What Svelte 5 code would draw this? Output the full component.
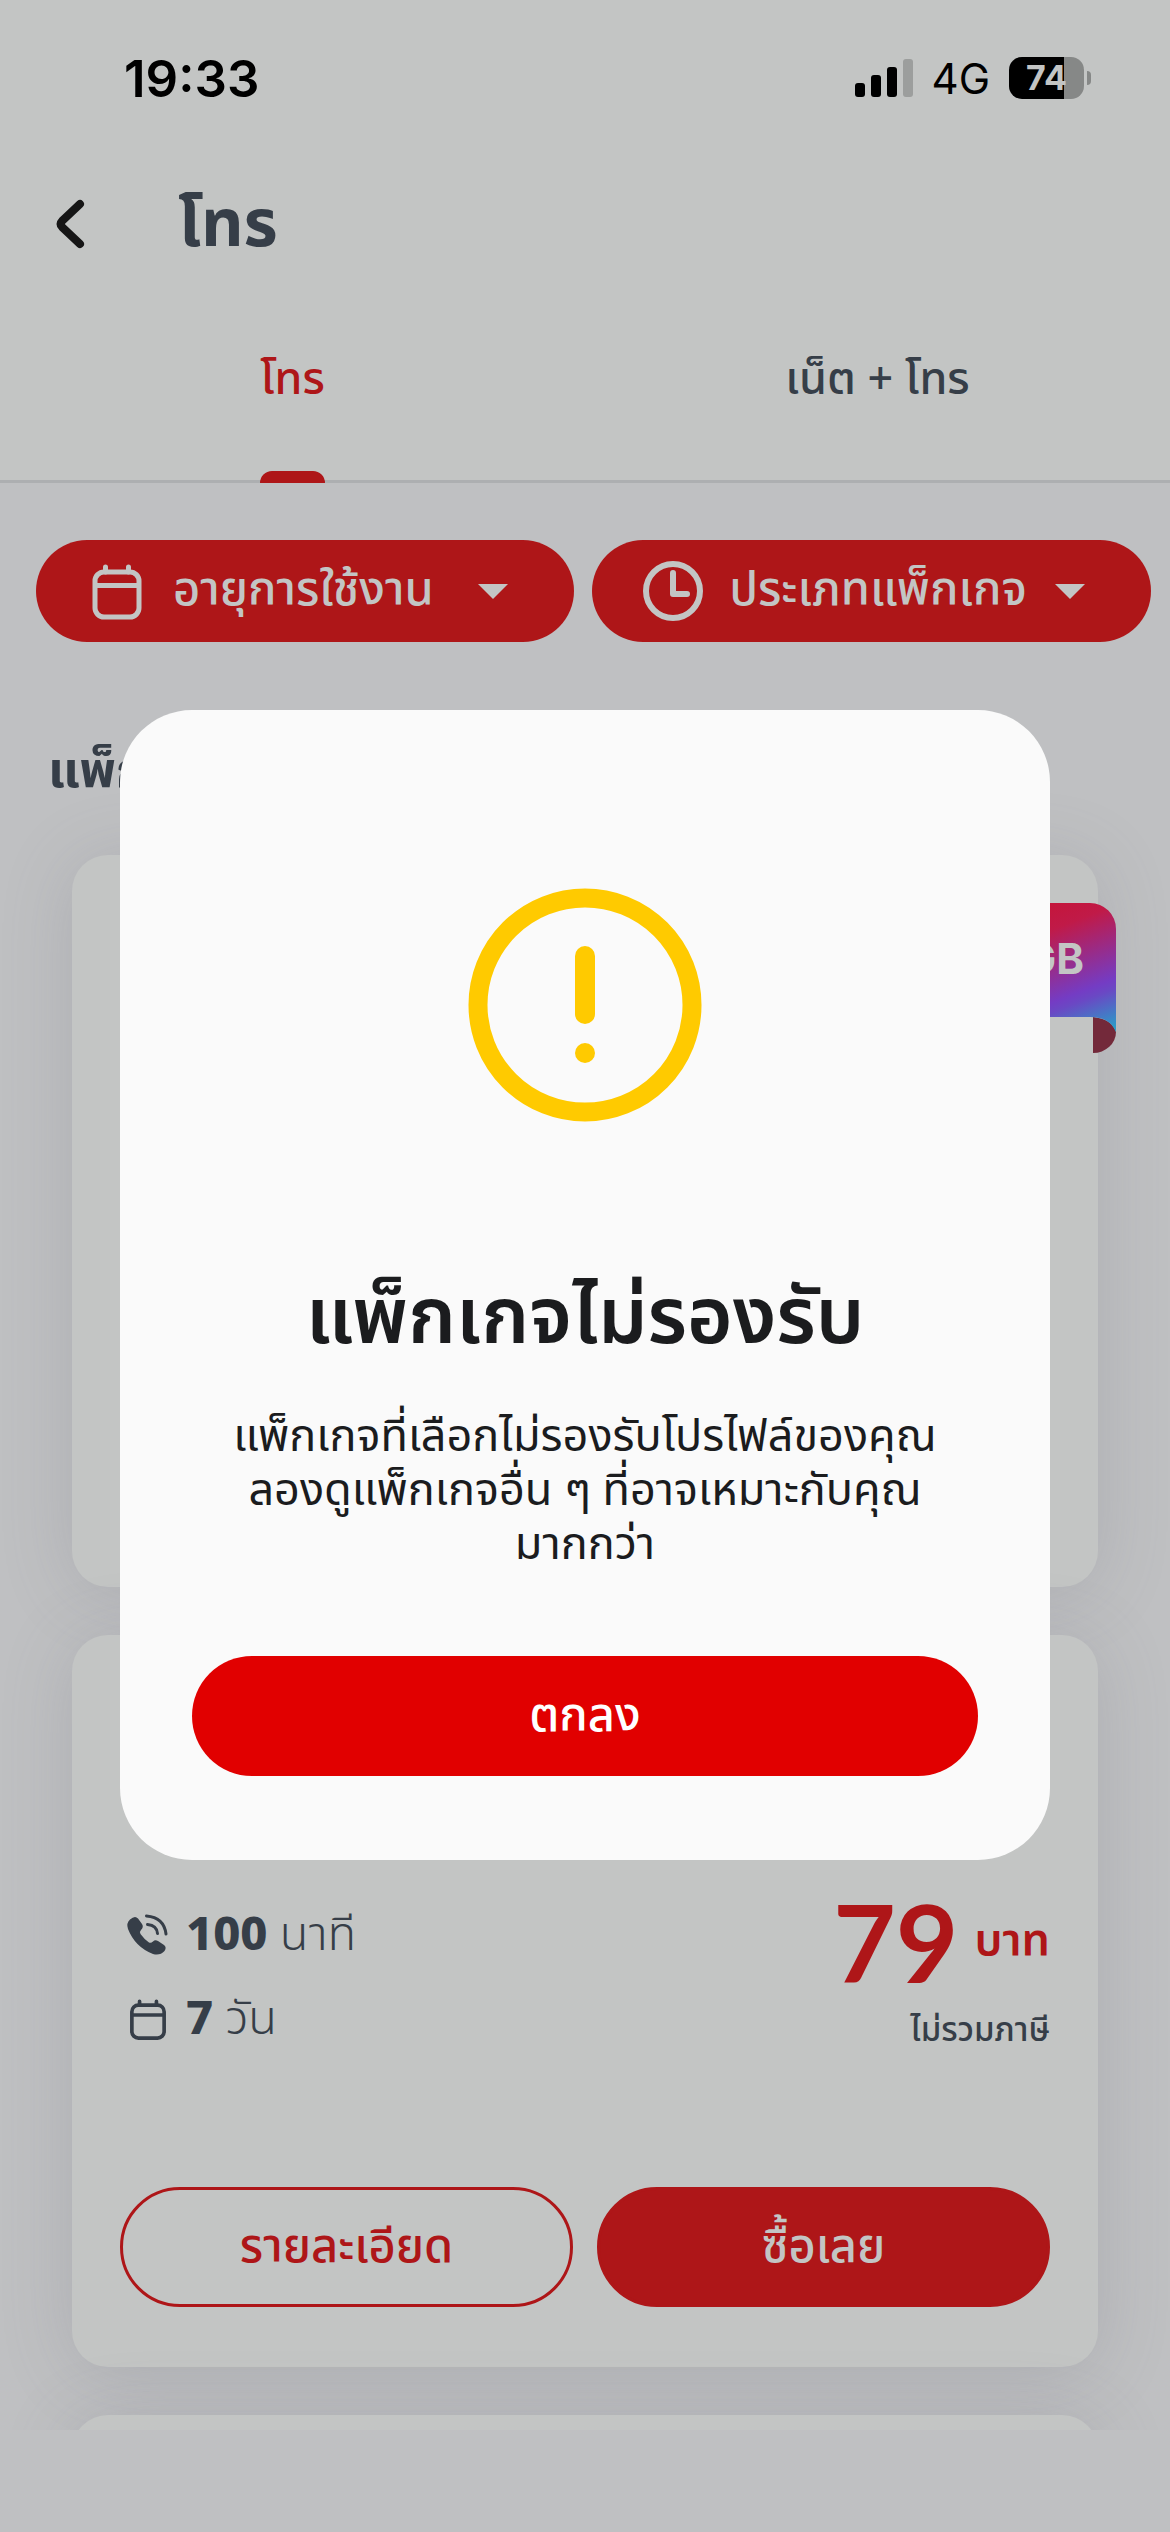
<script>
	const filters = [
		{ icon: "calendar", label: "อายุการใช้งาน" },
		{ icon: "clock", label: "ประเภทแพ็กเกจ" },
	];

	const tabs = ["โทร", "เน็ต + โทร"];
	let activeTab = $state(0);
	let showDialog = $state(true);

	const packages = [
		{ ribbon: "GB" },
		{ minutes: 100, days: 7, price: 79 },
		{},
	];
</script>

{#snippet calendar()}
	<svg class="calendar" viewBox="0 0 60 60" fill="none" stroke="currentColor" stroke-width="5" aria-hidden="true">
		<rect x="8" y="11" width="44" height="45" rx="9" />
		<path d="M8 24.500h44" />
		<path d="M18.500 11V6M41.500 11V6" stroke-linecap="round" />
	</svg>
{/snippet}

<div class="screen">
	<header>
		<div class="status">
			<span class="time">19:33</span>
			<div class="signals">
				<svg class="bars" viewBox="0 0 58 38" aria-hidden="true">
					<rect x="0" y="24" width="10" height="14" rx="3" />
					<rect x="16" y="16" width="10" height="22" rx="3" />
					<rect x="32" y="8" width="10" height="30" rx="3" />
					<rect x="48" y="0" width="10" height="38" rx="3" fill="#9c9e9d" />
				</svg>
				<span class="network">4G</span>
				<div class="battery"><span>74</span></div>
			</div>
		</div>

		<div class="title">
			<button class="back" aria-label="กลับ">
				<svg viewBox="0 0 30 50" fill="none" stroke="#161616" stroke-width="8" stroke-linecap="round" stroke-linejoin="round">
					<path d="M25 5L7 22q-3 3 0 6L25 45" />
				</svg>
			</button>
			<h1>โทร</h1>
		</div>

		<nav>
			{#each tabs as tab, i}
				<button class="tab" class:active={activeTab === i} onclick={() => (activeTab = i)}>
					<span>{tab}</span>
				</button>
			{/each}
		</nav>
	</header>

	<main>
		<div class="filters">
			{#each filters as filter}
				<button class="filter">
					{#if filter.icon === "calendar"}
						{@render calendar()}
					{:else}
						<svg viewBox="0 0 60 60" fill="none" stroke="currentColor" stroke-width="6" aria-hidden="true">
							<circle cx="30" cy="30" r="27" />
							<path d="M30 12v21h14" stroke-linecap="round" stroke-linejoin="round" />
						</svg>
					{/if}
					<span>{filter.label}</span>
					<svg class="arrow" viewBox="0 0 30 15" fill="currentColor" aria-hidden="true">
						<path d="M0 0h30L15 15z" />
					</svg>
				</button>
			{/each}
		</div>

		<h2>แพ็กเกจ</h2>

		<div class="cards">
			{#each packages as pack}
				<article>
					{#if pack.ribbon}
						<div class="ribbon">
							<svg viewBox="0 0 160 150" aria-hidden="true">
								<defs>
									<linearGradient id="ribbon" gradientUnits="userSpaceOnUse" x1="80" y1="-8" x2="134" y2="134">
										<stop offset="0.100" stop-color="#c4163c" />
										<stop offset="0.250" stop-color="#c01a48" />
										<stop offset="0.700" stop-color="#743cc4" />
										<stop offset="0.760" stop-color="#6a48c4" />
										<stop offset="1" stop-color="#2a9cc8" />
									</linearGradient>
								</defs>
								<path d="M137 114V150A23 21 0 0 0 160 129Q156 116 137 114z" fill="#73293a" />
								<path d="M0 0H134A26 26 0 0 1 160 26V129Q154 114 134 114H0z" fill="url(#ribbon)" />
							</svg>
							<span>{pack.ribbon}</span>
						</div>
					{/if}

					{#if pack.price}
						<div class="details">
							<ul>
								<li>
									<svg viewBox="0 0 42 42" aria-hidden="true">
										<path
											d="M4 5.500Q9 1 12 4.500L16 10Q18 13 15 16Q13 18 14.500 20Q18 25 23 28.500Q25 29.500 27 27.500Q29 25.500 32 27L38 31Q41 33.500 38.500 37Q34 42 27 40Q9 33 2 15Q0 9 4 5.500z"
											fill="currentColor"
										/>
										<path
											d="M20.500 2Q38 3.500 40 20M21.500 10.500Q31 11.500 31.500 19.500"
											fill="none"
											stroke="currentColor"
											stroke-width="3"
											stroke-linecap="round"
										/>
									</svg>
									<span><b>{pack.minutes}</b> นาที</span>
								</li>
								<li>
									{@render calendar()}
									<span><b>{pack.days}</b> วัน</span>
								</li>
							</ul>
							<div class="cost">
								<p class="price"><strong>{pack.price}</strong> <span>บาท</span></p>
								<p class="tax">ไม่รวมภาษี</p>
							</div>
						</div>
						<div class="actions">
							<button class="outline">รายละเอียด</button>
							<button>ซื้อเลย</button>
						</div>
					{/if}
				</article>
			{/each}
		</div>
	</main>

	{#if showDialog}
		<div class="backdrop">
			<div class="dialog" role="alertdialog" aria-modal="true" aria-labelledby="dialog-title" aria-describedby="dialog-text">
				<svg viewBox="0 0 234 234" fill="none" stroke="#ffca00" aria-hidden="true">
					<circle cx="117" cy="117" r="107" stroke-width="19" />
					<path d="M117 68v58" stroke-width="20" stroke-linecap="round" />
					<circle cx="117" cy="165" r="10" fill="#ffca00" stroke="none" />
				</svg>
				<h3 id="dialog-title">แพ็กเกจไม่รองรับ</h3>
				<p id="dialog-text">
					แพ็กเกจที่เลือกไม่รองรับโปรไฟล์ของคุณ<br />
					ลองดูแพ็กเกจอื่น ๆ ที่อาจเหมาะกับคุณ<br />
					มากกว่า
				</p>
				<button onclick={() => (showDialog = false)}>ตกลง</button>
			</div>
		</div>
	{/if}
</div>

<style>
	:global(body) {
		background-color: #bfc0c2;
	}

	.screen {
		--red: #ae1618;
		--surface: #c3c5c4;
		--ink: #363e48;
		position: relative;
		display: flex;
		flex-direction: column;
		box-sizing: border-box;
		height: 100vh;
		padding-bottom: 102px;
		overflow: hidden;
		background-color: #bfc0c2;
		color: var(--ink);
		font-family: "Noto Sans Thai", "Noto Sans", sans-serif;
		font-size: 45px;
	}

	h1,
	h2,
	h3,
	p,
	ul {
		margin: 0;
		padding: 0;
	}

	button {
		border: none;
		padding: 0;
		background: none;
		color: inherit;
		font: inherit;
		cursor: pointer;
	}

	svg {
		flex: none;
		display: block;
	}

	header {
		flex: none;
		background-color: var(--surface);
		border-bottom: 3px solid #adafb1;
	}

	/* Status bar */
	.status {
		display: flex;
		align-items: center;
		justify-content: space-between;
		height: 156px;
		padding: 0 86px 0 124px;
		color: black;
		font-family: Inter, sans-serif;
	}

	.time {
		font-size: 51px;
		font-weight: 600;
	}

	.signals {
		display: flex;
		align-items: center;
		gap: 19px;
	}

	.bars {
		width: 58px;
		height: 38px;
	}

	.network {
		font-size: 42px;
	}

	.battery {
		position: relative;
		width: 75px;
		height: 42px;
		border-radius: 13px;
		background: linear-gradient(to right, black 74%, #868887 74%);
		color: var(--surface);
		font-size: 34px;
		font-weight: 700;
		line-height: 42px;
		text-align: center;
	}

	.battery::after {
		content: "";
		position: absolute;
		right: -7px;
		top: 14px;
		width: 4px;
		height: 14px;
		border-radius: 0 4px 4px 0;
		background-color: #868887;
	}

	/* Title and tabs */
	.title {
		display: flex;
		align-items: center;
		gap: 93px;
		height: 136px;
		padding: 0 55px;
	}

	.back svg {
		width: 30px;
		height: 50px;
	}

	h1 {
		padding-top: 4px;
		font-size: 66px;
		font-weight: 700;
		line-height: 96px;
	}

	nav {
		display: flex;
		height: 188px;
	}

	.tab {
		flex: 1;
		display: flex;
		justify-content: center;
		height: 191px;
		font-weight: 500;
	}

	.tab span {
		position: relative;
		height: 100%;
		line-height: 176px;
	}

	.active {
		color: var(--red);
	}

	.active span::after {
		content: "";
		position: absolute;
		left: 0;
		right: 0;
		bottom: 0;
		height: 12px;
		border-radius: 12px 12px 0 0;
		background-color: var(--red);
	}

	main {
		flex: 1;
		min-height: 0;
		overflow: hidden;
	}

	/* Filters */
	.filters {
		display: grid;
		grid-template-columns: 26fr 27fr;
		gap: 18px;
		padding: 57px 19px 0 36px;
	}

	.filter {
		display: flex;
		align-items: center;
		gap: 26px;
		height: 102px;
		padding: 0 66px 0 51px;
		border-radius: 51px;
		background-color: var(--red);
		color: var(--surface);
		font-size: 47px;
		font-weight: 500;
		line-height: 64px;
		white-space: nowrap;
	}

	.filter svg {
		width: 60px;
		height: 60px;
	}

	.filter .arrow {
		width: 30px;
		height: 15px;
		margin-left: auto;
	}

	h2 {
		padding: 94px 48px 0;
		font-size: 50px;
		font-weight: 700;
		line-height: 72px;
	}

	/* Package cards */
	.cards {
		display: flex;
		flex-direction: column;
		gap: 48px;
		padding: 47px 72px;
	}

	article {
		position: relative;
		display: flex;
		flex-direction: column;
		justify-content: flex-end;
		box-sizing: border-box;
		min-height: 732px;
		padding: 48px 48px 60px;
		border-radius: 36px;
		background-color: var(--surface);
		box-shadow: 0 6px 72px rgba(100, 100, 115, 0.2);
	}

	.ribbon {
		position: absolute;
		top: 48px;
		right: -18px;
		width: 160px;
		height: 150px;
		color: var(--surface);
		font-family: Inter, sans-serif;
		font-size: 42px;
		font-weight: 700;
	}

	.ribbon span {
		position: absolute;
		top: 0;
		right: 32px;
		line-height: 112px;
	}

	.details {
		display: flex;
		justify-content: space-between;
		margin-bottom: 126px;
	}

	ul {
		list-style: none;
	}

	li {
		display: flex;
		align-items: center;
		gap: 18px;
		height: 84px;
		padding-left: 6px;
		font-size: 47px;
		font-weight: 300;
	}

	li svg {
		width: 42px;
		height: 42px;
	}

	li .calendar {
		width: 44px;
		height: 44px;
		margin-right: -2px;
	}

	li b {
		font-family: "Noto Sans", sans-serif;
		font-weight: 800;
	}

	.cost {
		text-align: right;
	}

	.price {
		height: 108px;
		color: var(--red);
		line-height: 96px;
		display: flex;
		justify-content: flex-end;
		gap: 16px;
	}

	.price strong {
		font-family: Lato, sans-serif;
		font-size: 108px;
	}

	.price span {
		font-weight: 600;
	}

	.tax {
		font-size: 33px;
		font-weight: 500;
		line-height: 60px;
	}

	.actions {
		display: flex;
		gap: 24px;
	}

	.actions button {
		flex: 1;
		box-sizing: border-box;
		height: 120px;
		border: 3px solid var(--red);
		border-radius: 60px;
		background-color: var(--red);
		color: var(--surface);
		font-size: 47px;
		font-weight: 500;
	}

	.actions .outline {
		background: none;
		color: var(--red);
	}

	/* Dialog */
	.backdrop {
		position: absolute;
		inset: 0;
		display: flex;
		align-items: center;
		padding: 38px 120px 0;
	}

	.dialog {
		flex: 1;
		display: flex;
		flex-direction: column;
		align-items: center;
		padding: 178px 72px 84px;
		border-radius: 72px;
		background-color: #fafafa;
		color: #1b1c1e;
		text-align: center;
	}

	.dialog svg {
		width: 234px;
		height: 234px;
	}

	h3 {
		margin-top: 143px;
		font-size: 78px;
		font-weight: 600;
		line-height: 108px;
		white-space: nowrap;
	}

	.dialog p {
		margin-top: 37px;
		line-height: 54px;
		white-space: nowrap;
	}

	.dialog button {
		align-self: stretch;
		height: 120px;
		margin-top: 84px;
		border-radius: 60px;
		background-color: #e10000;
		color: white;
		font-size: 47px;
		font-weight: 500;
	}
</style>
